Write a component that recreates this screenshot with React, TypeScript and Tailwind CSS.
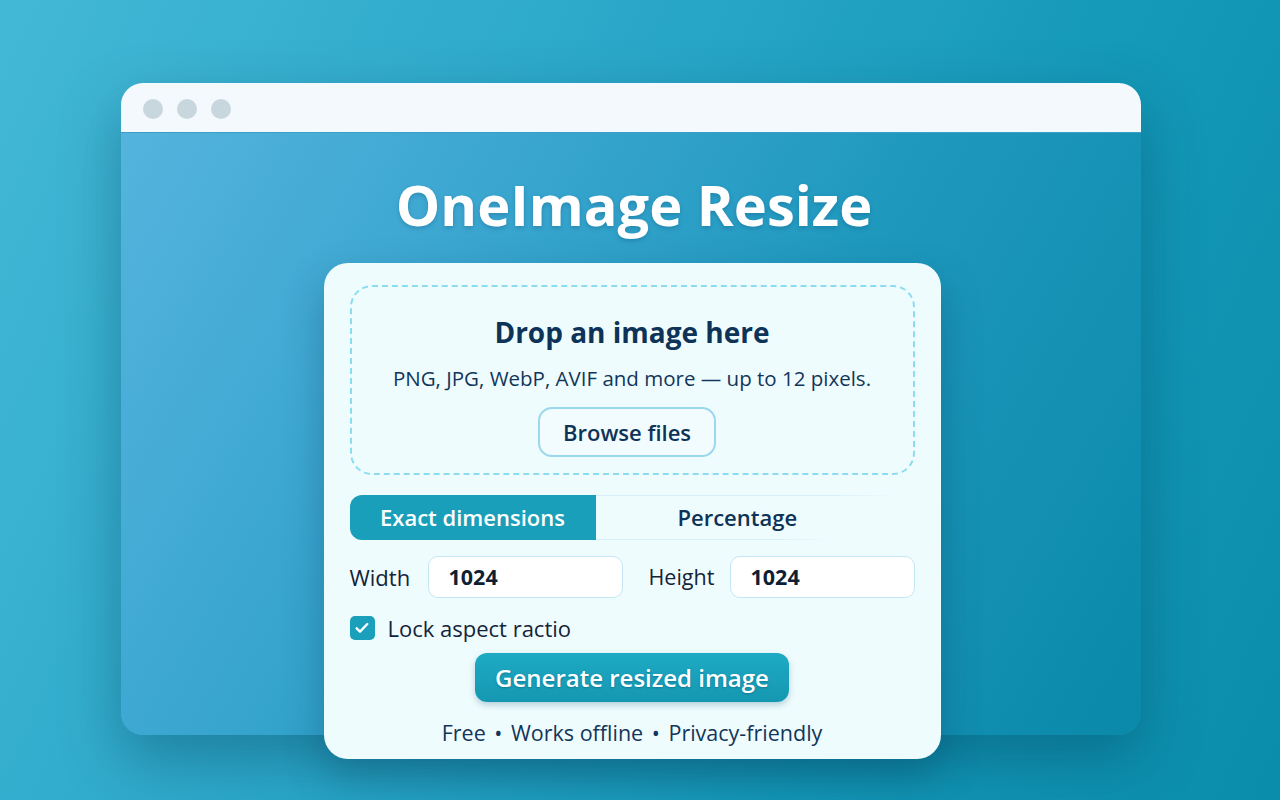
import React from "react";

const font = { fontFamily: '"Open Sans", "Noto Sans", sans-serif' };

export default function App() {
  return (
    <div
      className="w-full h-[800px] overflow-hidden bg-[linear-gradient(115deg,#43b8d6_0%,#2aa7c8_40%,#1499b8_70%,#0a8daa_100%)] pt-[83px]"
      style={font}
    >
      <div className="ml-[121px] w-[1020px] h-[652px] flex flex-col rounded-[22px] shadow-[0_24px_60px_rgba(0,50,80,0.35)]">
        <div className="h-[50px] shrink-0 flex items-center gap-[14px] pl-[22px] pt-[2px] bg-[#f4f9fd] rounded-t-[22px] border-b border-[#3a9fc6]">
          <div className="w-[20px] h-[20px] rounded-full bg-[#c8d6dd]" />
          <div className="w-[20px] h-[20px] rounded-full bg-[#c8d6dd]" />
          <div className="w-[20px] h-[20px] rounded-full bg-[#c8d6dd]" />
        </div>
        <div className="h-[602px] min-h-0 shrink-0 flex flex-col items-center rounded-b-[22px] bg-[linear-gradient(120deg,#54b4dd_0%,#3aa6d0_30%,#1e98bd_60%,#0a89a9_100%)]">
          <h1 className="mt-[39px] ml-[6px] text-[56px] leading-[64px] font-bold text-white [text-shadow:0_2px_4px_rgba(0,60,100,0.25)]">
            OneImage Resize
          </h1>
          <div className="mt-[27px] ml-[2px] w-[617px] h-[496px] shrink-0 rounded-[24px] bg-[#effcfe] shadow-[0_18px_40px_rgba(0,50,80,0.3)] px-[26px] pt-[22px] flex flex-col">
            <div className="h-[190px] shrink-0 rounded-[22px] border-2 border-dashed border-[#8adcef] flex flex-col items-center pt-[26px]">
              <div className="text-[28px] leading-[38px] font-bold text-[#0e3358]">Drop an image here</div>
              <div className="mt-[13px] text-[20.5px] leading-[28px] text-[#12365a]">
                PNG, JPG, WebP, AVIF and more — up to 12 pixels.
              </div>
              <button className="mt-[15px] mr-[10px] w-[178px] h-[50px] rounded-[14px] border-2 border-[#9ad8ec] bg-[#f2fcfe] text-[22px] leading-[30px] font-semibold text-[#0e3358]">
                Browse files
              </button>
            </div>

            <div className="mt-[20px] h-[45px] shrink-0 flex">
              <div className="w-[246px] rounded-l-[12px] bg-[#1a9fba] flex items-center justify-center text-[22px] font-semibold text-white">
                Exact dimensions
              </div>
              <div className="w-[300px] flex flex-col">
                <div className="h-px bg-[linear-gradient(90deg,#d5eef7_0%,#d5eef7_75%,rgba(213,238,247,0)_100%)]" />
                <div className="flex-1 flex items-center pl-[82px] text-[22px] font-semibold text-[#0e3358]">
                  Percentage
                </div>
                <div className="h-px w-[240px] bg-[linear-gradient(90deg,#d5eef7_0%,#d5eef7_70%,rgba(213,238,247,0)_100%)]" />
              </div>
            </div>

            <div className="mt-[16px] h-[42px] shrink-0 flex items-center">
              <span className="w-[78px] text-[22px] leading-[30px] text-[#14233a]">Width</span>
              <div className="w-[195px] h-[42px] rounded-[10px] border border-[#c4e7f4] bg-white flex items-center pl-[20px] text-[21.5px] font-bold text-[#0f1f35]">
                1024
              </div>
              <span className="ml-[26px] w-[81px] text-[21.5px] leading-[30px] text-[#14233a]">Height</span>
              <div className="w-[185px] h-[42px] rounded-[10px] border border-[#c4e7f4] bg-white flex items-center pl-[20px] text-[21.5px] font-bold text-[#0f1f35]">
                1024
              </div>
            </div>

            <div className="mt-[18px] h-[24px] shrink-0 flex items-center">
              <div className="w-[25px] h-[24px] rounded-[5px] bg-[#1aa0bb] flex items-center justify-center">
                <svg width="16" height="16" viewBox="0 0 24 24" fill="none" stroke="white" strokeWidth="3.5" strokeLinecap="round" strokeLinejoin="round">
                  <path d="M4 12.5l5 5L20 6" />
                </svg>
              </div>
              <span className="ml-[13px] text-[22px] leading-[24px] text-[#14233a]">Lock aspect ractio</span>
            </div>

            <button className="mt-[13px] shrink-0 self-center w-[314px] h-[49px] rounded-[12px] bg-[linear-gradient(180deg,#1eaac4_0%,#1597b1_100%)] shadow-[0_3px_6px_rgba(0,80,110,0.25)] text-[24px] leading-[30px] font-semibold text-white [text-shadow:0_1px_2px_rgba(0,60,80,0.35)]">
              Generate resized image
            </button>

            <div className="mt-[17px] text-center text-[21.5px] leading-[28px] text-[#12365a]">
              Free <span className="mx-[3px]">•</span> Works offline <span className="mx-[3px]">•</span> Privacy-friendly
            </div>
          </div>
        </div>
      </div>
    </div>
  );
}
